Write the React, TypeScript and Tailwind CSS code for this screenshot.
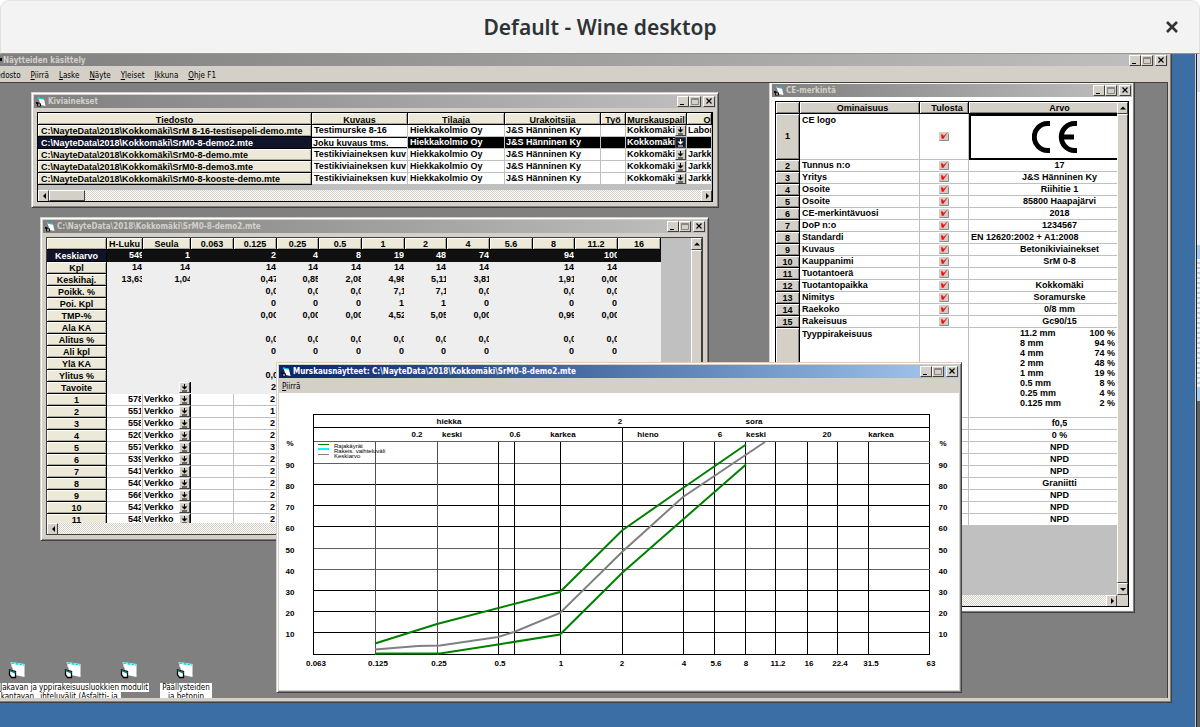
import React from "react";

const UI = "font-['DejaVu_Sans_Condensed','DejaVu_Sans',sans-serif]";

function AppIcon() {
  return (
    <svg width="10" height="10" viewBox="0 0 10 10" className="shrink-0" aria-hidden="true">
      <path d="M2 0.5 L8 2 L9.5 9 L5 8 Z" fill="#fff" />
      <path d="M2 1 L8 2.2" stroke="#00c8d8" strokeWidth="1.2" />
      <path d="M0 5 H2.5 V6.5 H5 V9.5 H1 V7 H0 Z" fill="#111" />
      <path d="M2 7.5 H4 V8.5 H2 Z" fill="#fff" />
    </svg>
  );
}

const bevel =
  "border border-t-white border-l-white border-r-[#404040] border-b-[#404040] bg-[#d4d0c8]";

function WindowButtons() {
  const cls = `flex h-[11px] w-[12px] items-center justify-center ${bevel}`;
  return (
    <div className="ml-auto flex shrink-0">
      <button aria-label="Minimize" className={cls}>
        <svg width="10" height="9" viewBox="0 0 10 9">
          <path d="M2 7.5 H6" stroke="#000" strokeWidth="1" />
        </svg>
      </button>
      <button aria-label="Maximize" className={cls}>
        <svg width="10" height="9" viewBox="0 0 10 9">
          <path d="M1.5 7.5 V1.5 H8.5 V7.5 Z M1.5 2.5 H8.5" stroke="#8a8880" fill="none" />
        </svg>
      </button>
      <button aria-label="Close" className={`ml-[2px] ${cls}`}>
        <svg width="10" height="9" viewBox="0 0 10 9">
          <path d="M2.5 1.5 L7.5 6.5 M7.5 1.5 L2.5 6.5" stroke="#000" strokeWidth="1.2" />
        </svg>
      </button>
    </div>
  );
}

function Win({
  title,
  place,
  active,
  white,
  children,
}: {
  title: string;
  place: string;
  active?: boolean;
  white?: boolean;
  children: React.ReactNode;
}) {
  return (
    <section
      aria-label={title}
      className={`absolute flex flex-col border border-t-[#d4d0c8] border-l-[#d4d0c8] border-r-[#404040] border-b-[#404040] p-[2px] shadow-[inset_1px_1px_0_#fff,inset_-1px_-1px_0_#808080] ${
        white ? "bg-[#f4f3f0]" : "bg-[#d4d0c8]"
      } ${place}`}
    >
      <header
        className={`flex h-[13px] shrink-0 items-center gap-[2px] pl-[2px] pr-[1px] bg-gradient-to-r ${
          active ? "from-[#0a246a] to-[#a6caf0] text-white" : "from-[#808080] to-[#c0c0c0] text-[#d4d0c8]"
        }`}
      >
        <AppIcon />
        <h2 className={`${UI} truncate pt-[1px] text-[8px] leading-[12px] font-bold`}>{title}</h2>
        <WindowButtons />
      </header>
      {children}
    </section>
  );
}

function MenuItem({ label }: { label: string }) {
  return (
    <button className={`${UI} text-[8px] leading-[14px] whitespace-nowrap text-black`}>
      <span className="underline">{label[0]}</span>
      {label.slice(1)}
    </button>
  );
}

const ARROWS = {
  left: "M6 1 L6 7 L3 4 Z",
  right: "M3 1 L3 7 L6 4 Z",
  up: "M1 5.5 L7 5.5 L4 2.5 Z",
  down: "M1 3 L7 3 L4 6 Z",
};

function ScrollButton({ dir }: { dir: keyof typeof ARROWS }) {
  return (
    <button
      aria-label={`Scroll ${dir}`}
      className={`flex h-[12px] w-[11px] shrink-0 items-center justify-center ${bevel}`}
    >
      <svg width="8" height="8" viewBox="0 0 8 8">
        <path d={ARROWS[dir]} fill="#000" />
      </svg>
    </button>
  );
}

const track = "bg-[repeating-conic-gradient(#fff_0_25%,#d4d0c8_0_50%)] bg-[length:2px_2px]";

function DropArrow({ dark }: { dark?: boolean }) {
  return (
    <span
      className={`pointer-events-none flex h-[11px] w-[11px] shrink-0 items-center justify-center border border-r-[#404040] border-b-[#404040] ${
        dark ? "border-t-[#445] border-l-[#445] bg-[#141c30] text-white" : "border-t-white border-l-white bg-[#d4d0c8] text-black"
      }`}
    >
      <svg width="7" height="8" viewBox="0 0 7 8">
        <path d="M3 0 H4 V2.5 H6.5 L3.5 5.5 L0.5 2.5 H3 Z M1 6.5 H6 V7.5 H1 Z" fill="currentColor" />
      </svg>
    </span>
  );
}

function Combo({ value, label, dark }: { value: string; label: string; dark?: boolean }) {
  return (
    <div className="flex h-[11px] overflow-hidden">
      <select
        aria-label={label}
        defaultValue={value}
        className="h-[11px] min-w-0 flex-1 appearance-none overflow-hidden bg-transparent p-0 pl-[1px] text-[9px] leading-[11px] font-bold"
      >
        <option>{value}</option>
      </select>
      <DropArrow dark={dark} />
    </div>
  );
}

const cell = "h-[11px] overflow-hidden whitespace-nowrap leading-[11px]";
const beige =
  "p-0 border-r border-b border-black bg-[#ece9d8] shadow-[inset_1px_1px_0_#fff,inset_-1px_-1px_0_#aca899]";
const grey =
  "p-0 border-r border-b border-black bg-[#d4d0c8] shadow-[inset_1px_1px_0_#fff,inset_-1px_-1px_0_#808080]";

const materials = [
  ["C:\\NayteData\\2018\\Kokkomäki\\SrM 8-16-testisepeli-demo.mte", "Testimurske 8-16", "Labor"],
  ["C:\\NayteData\\2018\\Kokkomäki\\SrM0-8-demo2.mte", "Joku kuvaus tms.", ""],
  ["C:\\NayteData\\2018\\Kokkomäki\\SrM0-8-demo.mte", "Testikiviaineksen kuv", "Jarkk"],
  ["C:\\NayteData\\2018\\Kokkomäki\\SrM0-8-demo3.mte", "Testikiviaineksen kuv", "Jarkk"],
  ["C:\\NayteData\\2018\\Kokkomäki\\SrM0-8-kooste-demo.mte", "Testikiviaineksen kuv", "Jarkk"],
];

function MaterialsWindow() {
  const td = "p-0 border-r border-b border-[#c0c0c0]";
  return (
    <Win title="Kiviainekset" place="left-[31px] top-[9px] h-[116px] w-[688px]">
      <div className="flex min-h-0 flex-1 flex-col px-[3px] pt-[4px] pb-[3px]">
        <div className="flex min-h-0 flex-1 flex-col overflow-hidden border border-black bg-[#c0c0c0]">
          <div className="min-h-0 flex-1 overflow-hidden">
            <table className="w-full table-fixed border-separate border-spacing-0 text-[9px] font-bold">
              <colgroup>
                <col className="w-[274px]" />
                <col className="w-[96px]" />
                <col className="w-[97px]" />
                <col className="w-[96px]" />
                <col className="w-[25px]" />
                <col className="w-[61px]" />
                <col />
              </colgroup>
              <thead>
                <tr>
                  {["Tiedosto", "Kuvaus", "Tilaaja", "Urakoitsija", "Työ", "Murskauspail", "O"].map((h) => (
                    <th key={h} className={beige}>
                      <div className={`${cell} pt-[2px] ${h === "O" ? "pl-[16px]" : ""}`}>{h}</div>
                    </th>
                  ))}
                </tr>
              </thead>
              <tbody>
                {materials.map(([file, desc, lab], i) => {
                  const sel = i === 1;
                  return (
                    <tr key={file} className={sel ? "bg-black text-white" : "bg-white text-black"}>
                      <th
                        className={
                          sel ? "border-r border-b border-black bg-[#10142a] p-0 text-left" : `${beige} text-left`
                        }
                      >
                        <div className={`${cell} pt-[1px] pl-[3px]`}>{file}</div>
                      </th>
                      <td className={td}>
                        {sel ? (
                          <input
                            aria-label="Kuvaus"
                            defaultValue={desc}
                            className="block h-[11px] w-full border-t border-b border-black bg-white p-0 pl-[1px] leading-[9px] text-black"
                          />
                        ) : (
                          <div className={`${cell} pl-[2px]`}>{desc}</div>
                        )}
                      </td>
                      <td className={td}>
                        <div className={`${cell} pl-[2px]`}>Hiekkakolmio Oy</div>
                      </td>
                      <td className={td}>
                        <div className={`${cell} pl-[1px]`}>J&amp;S Hänninen Ky</div>
                      </td>
                      <td className={td} />
                      <td className={td}>
                        <Combo value="Kokkomäki" label="Murskauspaikka" dark={sel} />
                      </td>
                      <td className={td}>
                        <div className={`${cell} pl-[1px]`}>{lab}</div>
                      </td>
                    </tr>
                  );
                })}
              </tbody>
            </table>
          </div>
          <div className={`flex h-[11px] shrink-0 overflow-hidden ${track}`}>
            <ScrollButton dir="left" />
            <div className={`w-[36px] ${bevel}`} />
            <div className="flex-1" />
            <ScrollButton dir="right" />
          </div>
        </div>
      </div>
    </Win>
  );
}

const sieves = ["H-Luku", "Seula", "0.063", "0.125", "0.25", "0.5", "1", "2", "4", "5.6", "8", "11.2", "16"];
const stats: [string, string[]][] = [
  ["Keskiarvo", ["549", "1", "", "2", "4", "8", "19", "48", "74", "", "94", "100", ""]],
  ["Kpl", ["14", "14", "", "14", "14", "14", "14", "14", "14", "", "14", "14", ""]],
  ["Keskihaj.", ["13,63", "1,04", "", "0,47", "0,85", "2,08", "4,98", "5,11", "3,81", "", "1,91", "0,00", ""]],
  ["Poikk. %", ["", "", "", "0,0", "0,0", "0,0", "7,1", "7,1", "0,0", "", "0,0", "0,0", ""]],
  ["Poi. Kpl", ["", "", "", "0", "0", "0", "1", "1", "0", "", "0", "0", ""]],
  ["TMP-%", ["", "", "", "0,00", "0,00", "0,00", "4,52", "5,05", "0,00", "", "0,99", "0,00", ""]],
  ["Ala KA", []],
  ["Alitus %", ["", "", "", "0,0", "0,0", "0,0", "0,0", "0,0", "0,0", "", "0,0", "0,0", ""]],
  ["Ali kpl", ["", "", "", "0", "0", "0", "0", "0", "0", "", "0", "0", ""]],
  ["Ylä KA", []],
  ["Ylitus %", ["", "", "", "0,0"]],
  ["Tavoite", ["", "", "", "2"]],
];
const samples = [
  ["578", "2"],
  ["551", "1"],
  ["558", "2"],
  ["520", "2"],
  ["557", "3"],
  ["539", "2"],
  ["541", "2"],
  ["540", "2"],
  ["566", "2"],
  ["542", "2"],
  ["548", "2"],
];

function Num({ v }: { v: string }) {
  return (
    <div className="mr-[1px]">
      <div className={`${cell} text-right`}>
        <span className={v.length > 2 ? "-mr-[2px]" : ""}>{v}</span>
      </div>
    </div>
  );
}

function SamplesWindow() {
  return (
    <Win
      title="C:\NayteData\2018\Kokkomäki\SrM0-8-demo2.mte"
      place="left-[40px] top-[134px] h-[324px] w-[669px]"
    >
      <div className="flex min-h-0 flex-1 flex-col px-[3px] pt-[4px] pb-[3px]">
        <div className="flex min-h-0 flex-1 flex-col overflow-hidden border border-[#404040] bg-[#c0c0c0]">
          <div className="flex min-h-0 flex-1 overflow-hidden">
            <div className="min-w-0 flex-1 overflow-hidden">
              <table className="w-[613px] table-fixed border-separate border-spacing-0 text-[9px] font-bold">
                <colgroup>
                  <col className="w-[60px]" />
                  <col className="w-[36px]" />
                  <col className="w-[48px]" />
                  {sieves.slice(2).map((s, i) => (
                    <col key={s} className={i % 3 === 2 ? "w-[42px]" : "w-[43px]"} />
                  ))}
                </colgroup>
                <thead>
                  <tr>
                    <td className={beige} />
                    {sieves.map((s) => (
                      <th key={s} className={beige}>
                        <div className={`${cell} pt-[1px]`}>{s}</div>
                      </th>
                    ))}
                  </tr>
                </thead>
                <tbody>
                  {stats.map(([name, vals], r) => (
                    <tr key={name} className={r === 0 ? "bg-[#101010] text-white" : "bg-[#eeeeee] text-black"}>
                      <th className={r === 0 ? "border-r border-b border-black bg-[#10142a] p-0" : beige}>
                        <div className={`${cell} pt-[1px]`}>{name}</div>
                      </th>
                      {sieves.map((s, c) => (
                        <td
                          key={s}
                          className={`border-b p-0 ${r === 0 ? "border-[#101010]" : "border-[#eeeeee]"}`}
                        >
                          {name === "Tavoite" && s === "Seula" ? (
                            <div className="flex justify-end border-r border-black">
                              <DropArrow />
                            </div>
                          ) : (
                            <Num v={vals[c] ?? ""} />
                          )}
                        </td>
                      ))}
                    </tr>
                  ))}
                  {samples.map(([h, v], r) => (
                    <tr key={r} className="bg-white text-black">
                      <th className={beige}>
                        <div className={`${cell} pt-[1px]`}>{r + 1}</div>
                      </th>
                      {sieves.map((s, c) => (
                        <td
                          key={s}
                          className={`border-r border-b border-b-[#c0c0c0] p-0 ${
                            c === 1 ? "border-r-black" : "border-r-[#c0c0c0]"
                          }`}
                        >
                          {c === 0 && <Num v={h} />}
                          {c === 1 && <Combo value="Verkko" label={`Seula ${r + 1}`} />}
                          {c === 3 && <Num v={v} />}
                        </td>
                      ))}
                    </tr>
                  ))}
                </tbody>
              </table>
            </div>
            <div className="flex w-[11px] shrink-0 flex-col">
              <ScrollButton dir="up" />
              <div className={`flex-1 ${bevel}`} />
            </div>
          </div>
          <div className={`flex h-[11px] shrink-0 overflow-hidden ${track}`}>
            <ScrollButton dir="left" />
          </div>
        </div>
      </div>
    </Win>
  );
}

function CheckMark({ label }: { label: string }) {
  return (
    <label className="mx-auto grid h-[9px] w-[10px] bg-[#d0cdc6]">
      <input type="checkbox" defaultChecked aria-label={label} className="col-start-1 row-start-1 appearance-none" />
      <svg width="10" height="9" viewBox="0 0 10 9" className="pointer-events-none col-start-1 row-start-1">
        <path d="M0.5 8.5 H9.5 V2" stroke="#8a8a8a" fill="none" />
        <path d="M2 2 L4 2.8 L4.6 4 L9 0 L4.2 7 L2.6 6.4 Z" fill="#f01010" />
      </svg>
    </label>
  );
}

const props: [string, string][] = [
  ["Tunnus n:o", "17"],
  ["Yritys", "J&S Hänninen Ky"],
  ["Osoite", "Riihitie 1"],
  ["Osoite", "85800 Haapajärvi"],
  ["CE-merkintävuosi", "2018"],
  ["DoP n:o", "1234567"],
  ["Standardi", "EN 12620:2002 + A1:2008"],
  ["Kuvaus", "Betonikiviainekset"],
  ["Kauppanimi", "SrM 0-8"],
  ["Tuotantoerä", ""],
  ["Tuotantopaikka", "Kokkomäki"],
  ["Nimitys", "Soramurske"],
  ["Raekoko", "0/8 mm"],
  ["Rakeisuus", "Gc90/15"],
];
const grading = [
  ["11.2 mm", "100 %"],
  ["8 mm", "94 %"],
  ["4 mm", "74 %"],
  ["2 mm", "48 %"],
  ["1 mm", "19 %"],
  ["0.5 mm", "8 %"],
  ["0.25 mm", "4 %"],
  ["0.125 mm", "2 %"],
];
const rest = ["f0,5", "0 %", "NPD", "NPD", "NPD", "Graniitti", "NPD", "NPD", "NPD"];

function CeWindow() {
  const td = "p-0 border-r border-b border-[#c0c0c0] bg-white";
  return (
    <Win title="CE-merkintä" white place="left-[769px] -top-[2px] h-[532px] w-[366px]">
      <div className="flex min-h-0 flex-1 flex-col bg-white px-[3px] pt-[4px] pb-[3px]">
        <div className="flex min-h-0 flex-1 border border-black">
          <div className="flex min-w-0 flex-1 flex-col bg-[#c0c0c0]">
            <div className="min-h-0 flex-1 overflow-hidden">
              <table className="w-[375px] table-fixed border-separate border-spacing-0 text-[9px] font-bold">
                <colgroup>
                  <col className="w-[24px]" />
                  <col className="w-[120px]" />
                  <col className="w-[49px]" />
                  <col />
                </colgroup>
                <thead>
                  <tr>
                    <td className={grey} />
                    <th className={grey}>
                      <div className={`${cell} pt-[1px] pl-[6px]`}>Ominaisuus</div>
                    </th>
                    <th className={grey}>
                      <div className={`${cell} pt-[1px] pl-[6px]`}>Tulosta</div>
                    </th>
                    <th className={grey}>
                      <div className={`${cell} pt-[1px]`}>Arvo</div>
                    </th>
                  </tr>
                </thead>
                <tbody>
                  <tr>
                    <th className={`${grey} h-[46px]`}>1</th>
                    <td className={`${td} pl-[2px] align-top leading-[12px]`}>CE logo</td>
                    <td className={td}>
                      <CheckMark label="CE logo" />
                    </td>
                    <td className="border-2 border-black bg-white p-0 pr-[12px]">
                      <svg width="45" height="33" viewBox="0 0 45 33" className="mx-auto" role="img" aria-label="CE">
                        <path
                          d="M18 2.5 H15.5 A13.2 13.5 0 0 0 15.5 29.5 H18 M45 2.5 H42.5 A13.2 13.5 0 0 0 42.5 29.5 H45 M30 16 H42"
                          fill="none"
                          stroke="#000"
                          strokeWidth="5"
                        />
                      </svg>
                    </td>
                  </tr>
                  {props.map(([name, value], i) => (
                    <tr key={i}>
                      <th className={grey}>
                        <div className={`${cell} pt-[1px]`}>{i + 2}</div>
                      </th>
                      <td className={td}>
                        <div className={`${cell} pl-[2px]`}>{name}</div>
                      </td>
                      <td className={td}>
                        <CheckMark label={name} />
                      </td>
                      <td className={td}>
                        <div className={`${cell} ${name === "Standardi" ? "pl-[2px]" : "text-center"}`}>{value}</div>
                      </td>
                    </tr>
                  ))}
                  <tr>
                    <th className={`${grey} h-[90px]`} />
                    <td className={`${td} pl-[2px] align-top leading-[12px]`}>Tyyppirakeisuus</td>
                    <td className={td} />
                    <td className={`${td} align-top`}>
                      <dl className="ml-[51px] grid w-[95px] grid-cols-2 leading-[10px] whitespace-nowrap">
                        {grading.map(([k, v]) => (
                          <React.Fragment key={k}>
                            <dt>{k}</dt>
                            <dd className="text-right">{v}</dd>
                          </React.Fragment>
                        ))}
                      </dl>
                    </td>
                  </tr>
                  {rest.map((v, i) => (
                    <tr key={i}>
                      <th className={grey} />
                      <td className={td} />
                      <td className={td} />
                      <td className={td}>
                        <div className={`${cell} text-center`}>{v}</div>
                      </td>
                    </tr>
                  ))}
                </tbody>
              </table>
            </div>
            <div className={`flex h-[11px] shrink-0 justify-end overflow-hidden ${track}`}>
              <ScrollButton dir="right" />
            </div>
          </div>
          <div className="flex w-[11px] shrink-0 flex-col bg-[#d4d0c8]">
            <ScrollButton dir="up" />
            <div className={`flex-1 ${bevel}`} />
            <ScrollButton dir="down" />
            <div className="h-[11px]" />
          </div>
        </div>
      </div>
    </Win>
  );
}

const percentY: [number, number][] = [
  [90, 463],
  [80, 484],
  [70, 505],
  [60, 526],
  [50, 548],
  [40, 569],
  [30, 590],
  [20, 611],
  [10, 632],
];
const sizeX: [string, number][] = [
  ["0.063", 316],
  ["0.125", 378],
  ["0.25", 439],
  ["0.5", 500],
  ["1", 561],
  ["2", 622],
  ["4", 684],
  ["5.6", 716],
  ["8", 746],
  ["11.2", 778],
  ["16", 809],
  ["22.4", 840],
  ["31.5", 871],
  ["63", 931],
];
const gridX = [375, 437, 498, 514, 560, 683, 714, 745, 775, 807, 837, 868];
const classes: [string, number, number][] = [
  ["hiekka", 449, 424],
  ["2", 620, 424],
  ["sora", 754, 424],
  ["0.2", 417, 437],
  ["keski", 452, 437],
  ["0.6", 515, 437],
  ["karkea", 563, 437],
  ["hieno", 648, 437],
  ["6", 720, 437],
  ["keski", 756, 437],
  ["20", 827, 437],
  ["karkea", 881, 437],
];

function ChartWindow() {
  return (
    <Win
      active
      title="Murskausnäytteet: C:\NayteData\2018\Kokkomäki\SrM0-8-demo2.mte"
      place="left-[276px] top-[279px] w-[686px]"
    >
      <nav className="flex h-[15px] items-center pt-[2px] pl-[3px]">
        <MenuItem label="Piirrä" />
      </nav>
      <svg
        viewBox="279 393 680 297"
        className="block w-full bg-white font-['Liberation_Sans',Arial,sans-serif] text-[8px]"
        role="img"
        aria-label="Rakeisuuskäyrä"
      >
        <g stroke="#000" fill="none" shapeRendering="crispEdges">
          <path d="M313.5 414.5 H929.5 V654.5 H313.5 Z M313.5 427.5 H929.5 M622.5 427.5 V654.5" />
          <path d="M313.5 441.5 H929.5" stroke="#606060" />
          {percentY.map(([p, y]) => (
            <path key={p} d={`M313.5 ${y + 0.5} H929.5`} stroke={p === 50 || p === 40 || p === 90 ? "#606060" : "#000"} />
          ))}
          {gridX.map((x) => (
            <path key={x} d={`M${x + 0.5} 441.5 V654.5`} stroke={x < 440 ? "#505050" : "#000"} />
          ))}
        </g>
        <g fill="none" strokeWidth="2">
          <path d="M375 649.5 L418 646 L440 645.5 L498 637 L514 632 L560 613 L622 552 L683 497 L765 442" stroke="#808080" />
          <path d="M375 643.5 L437 624 L560 592 L622 530.5 L683 488 L746 444.5" stroke="#008000" />
          <path d="M375 653.5 L440 653.5 L498 644.5 L560 634.5 L622 573 L683 519.5 L746 464.5" stroke="#008000" />
        </g>
        <g strokeWidth="1" shapeRendering="crispEdges">
          <path d="M318 444.5 H329" stroke="#008000" />
          <path d="M318 449 H329" stroke="#00ffff" strokeWidth="2" />
          <path d="M318 454.5 H329" stroke="#808080" />
        </g>
        <g className="text-[6px]">
          <text x="334" y="448">Rajakäyrät</text>
          <text x="334" y="453">Rakeis. vaihteluväli</text>
          <text x="334" y="458">Keskiarvo</text>
        </g>
        <g textAnchor="middle">
          {classes.map(([t, x, y]) => (
            <text key={t + x} x={x} y={y} className="font-bold">
              {t}
            </text>
          ))}
          {sizeX.map(([t, x]) => (
            <text key={t} x={x} y="666" className="font-bold">
              {t}
            </text>
          ))}
          {[290, 943].map((x) => (
            <g key={x} className="font-bold">
              <text x={x} y="446">%</text>
              {percentY.map(([p, y]) => (
                <text key={p} x={x} y={y + 5}>
                  {p}
                </text>
              ))}
            </g>
          ))}
        </g>
      </svg>
    </Win>
  );
}

function FormIcon() {
  return (
    <svg width="18" height="18" viewBox="0 0 18 18" aria-hidden="true">
      <path d="M3 1 L16.5 3 L16.5 16 L7 14 L4 6 Z" fill="#fff" />
      <path d="M4 6 L3 1" stroke="#d4d4d4" strokeWidth="1" />
      <path d="M3.5 1.8 L16 4" stroke="#10e0e0" strokeWidth="1.8" strokeDasharray="3 1" />
      <path d="M1.5 9 L7.5 10.5 L7.5 16.5 L3.5 16.5 L1.5 13.5 Z" fill="#fff" stroke="#000" strokeWidth="1.3" />
      <path d="M1.5 9.5 L7.5 11.8" stroke="#008080" strokeWidth="1.6" />
    </svg>
  );
}

const shortcuts = [
  { lines: ["Jakavan ja", "kantavan."], place: "-left-[10px] w-[41px]" },
  { lines: ["yppirakeisuusluokkien", "ihteluvälit (Asfaltti- ja"], place: "-left-[27px] w-[84px]" },
  { lines: ["modulit"], place: "left-0 w-[29px]" },
  { lines: ["Päällysteiden", "ja betonin"], place: "-left-[16px] w-[52px]" },
];

export default function App() {
  return (
    <div className="flex h-screen flex-col overflow-hidden bg-[#3a6ea5] font-['Liberation_Sans',Arial,sans-serif]">
      <div className="shrink-0 bg-white">
        <header className="grid h-[54px] grid-cols-[1fr_auto_1fr] items-center rounded-t-[9px] border border-t-[#e4e4e4] border-r-[#e0e0e0] border-b-[#98968f] border-l-[#e0e0e0] bg-[#f3f3f3] px-[19px]">
          <h1 className="col-start-2 pt-[1px] font-['Noto_Sans','Open_Sans',sans-serif] text-[21px] font-semibold text-[#2e3436]">
            Default - Wine desktop
          </h1>
          <button aria-label="Close" className="justify-self-end">
            <svg width="16" height="16" viewBox="0 0 16 16">
              <path d="M3 3 L13 13 M13 3 L3 13" stroke="#2e3436" strokeWidth="2.6" />
            </svg>
          </button>
        </header>
      </div>
      <div className="flex min-h-0 flex-1">
        <main className="mb-[24px] flex min-w-0 flex-1 flex-col border-r border-b border-[#404040] bg-[#d4d0c8] pr-[3px] pb-[4px] shadow-[inset_-1px_-1px_0_#808080]">
          <div className="flex h-[12px] shrink-0 items-center overflow-hidden bg-gradient-to-r from-[#808080] to-[#c0c0c0] pr-[1px]">
            <span className="mr-[1px] mb-[2px] h-[3px] w-[2px] bg-black" />
            <h2 className={`${UI} pt-[2px] text-[8px] leading-[10px] font-bold text-[#d4d0c8]`}>
              Näytteiden käsittely
            </h2>
            <WindowButtons />
          </div>
          <nav className="-ml-[10px] flex h-[17px] shrink-0 items-center gap-[10px] border-b border-[#404040] pt-[4px]">
            {["Tiedosto", "Piirrä", "Laske", "Näyte", "Yleiset", "Ikkuna", "Ohje F1"].map((m) => (
              <MenuItem key={m} label={m} />
            ))}
          </nav>
          <div className="relative min-h-0 flex-1 overflow-hidden border-r border-[#404040] bg-[#808080]">
            <MaterialsWindow />
            <SamplesWindow />
            <CeWindow />
            <ChartWindow />
            <div className="absolute top-[578px] left-[8px] flex gap-[38px]">
              {shortcuts.map((s) => (
                <a key={s.lines[0]} href="#" className="relative w-[18px]">
                  <FormIcon />
                  <span
                    className={`${UI} absolute top-[22px] bg-white text-center text-[8px] leading-[9px] whitespace-nowrap text-black ${s.place}`}
                  >
                    {s.lines.map((l) => (
                      <span key={l} className="flex justify-center">
                        {l}
                      </span>
                    ))}
                  </span>
                </a>
              ))}
            </div>
          </div>
        </main>
        <div className="w-[24px] shrink-0 border-r border-[#d4d0c8]" />
        <div className="flex w-[4px] shrink-0 flex-col border-l border-[#202020] bg-[#606060]">
          <div className="h-[38px] bg-[#dcdcec]" />
          <div className="h-[153px] bg-[#f4f4f4]" />
          <div className="h-[14px] bg-[#a6caf0]" />
          <div className="h-[128px] bg-[repeating-linear-gradient(#f0f0f0_0_3px,#b8cce8_3px_5px)]" />
          <div className="h-[14px] bg-[#a6caf0]" />
        </div>
      </div>
    </div>
  );
}
